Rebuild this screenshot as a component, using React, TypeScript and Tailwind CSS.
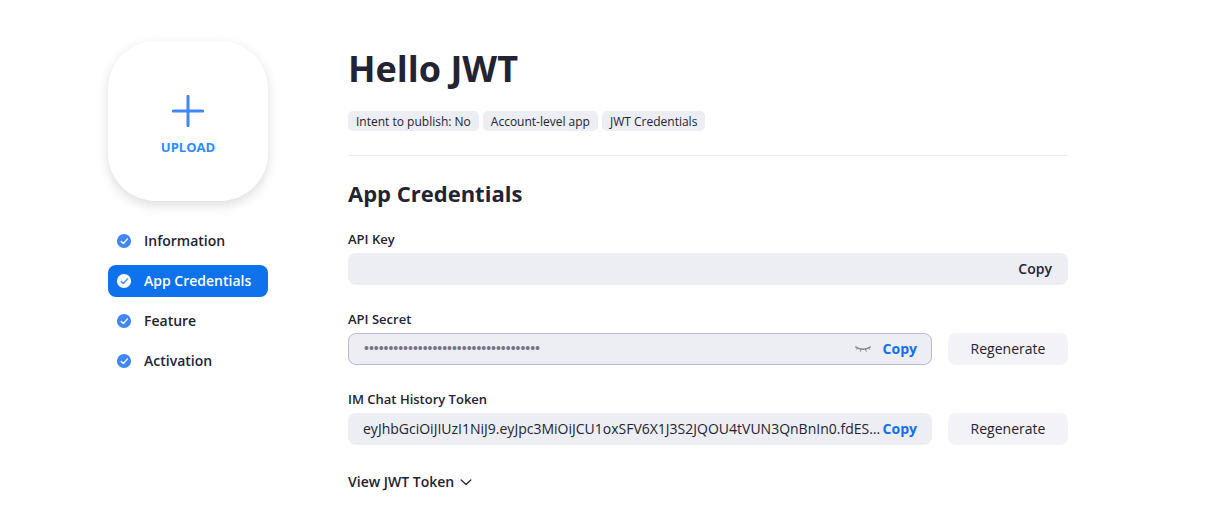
import React, { useState } from "react";

type Step = { label: string; active?: boolean };

const steps: Step[] = [
  { label: "Information" },
  { label: "App Credentials", active: true },
  { label: "Feature" },
  { label: "Activation" },
];

const tags = ["Intent to publish: No", "Account-level app", "JWT Credentials"];

const historyToken =
  "eyJhbGciOiJIUzI1NiJ9.eyJpc3MiOiJCU1oxSFV6X1J3S2JQOU4tVUN3QnBnIn0.fdES4kQm7ZtYw1";

function CheckIcon({ active }: { active?: boolean }) {
  return (
    <svg className="size-4 shrink-0" viewBox="0 0 16 16" fill="none" aria-hidden="true">
      <circle cx="8" cy="8" r="7.1" className={active ? "fill-white" : "fill-[#4087fc]"} />
      <path
        d="M5.2 8.5 7.3 10.6 11.4 5.9"
        className={active ? "stroke-[#4087fc]" : "stroke-white"}
        strokeWidth="1.4"
        strokeLinecap="round"
        strokeLinejoin="round"
      />
    </svg>
  );
}

function PlusIcon() {
  return (
    <svg className="size-8" viewBox="0 0 32 32" fill="none" aria-hidden="true">
      <path d="M16 1.3V30.7M1.3 16H30.7" stroke="#4087fc" strokeWidth="3" strokeLinecap="round" />
    </svg>
  );
}

function ClosedEyeIcon() {
  return (
    <svg className="h-4 w-4" viewBox="0 0 16 16" fill="none" stroke="#82828f" strokeLinecap="round" aria-hidden="true">
      <path d="M.8 6C4.2 9 11.8 9 15.2 6" strokeWidth="1.5" />
      <path d="M2.4 7.2 1.4 8.4M6 8.4 5.4 10.4M10.6 8.4 11.2 10.4M13.6 7.2 14.6 8.4" strokeWidth="0.9" />
    </svg>
  );
}

function Sidebar() {
  return (
    <aside className="w-40 shrink-0">
      <button
        type="button"
        className="flex h-40 w-full flex-col items-center justify-center gap-[10px] rounded-[48px] bg-white pt-[10px] text-[13px] leading-5 font-bold text-[#2d8cff] shadow-[0_4px_12px_rgba(0,0,0,0.14)]"
      >
        <PlusIcon />
        UPLOAD
      </button>
      <nav className="mt-6 flex flex-col gap-2">
        {steps.map((s) => (
          <a
            key={s.label}
            href="#"
            aria-current={s.active ? "step" : undefined}
            className={
              "flex h-8 items-center gap-3 rounded-lg px-2 text-sm font-semibold " +
              (s.active ? "bg-[#0e72ed] text-white" : "text-[#232333]")
            }
          >
            <CheckIcon active={s.active} />
            {s.label}
          </a>
        ))}
      </nav>
    </aside>
  );
}

function Regenerate() {
  return (
    <button type="button" className="h-8 w-30 shrink-0 rounded-lg bg-[#f2f2f7] text-sm">
      Regenerate
    </button>
  );
}

export default function App() {
  const [visible, setVisible] = useState(false);
  const [open, setOpen] = useState(false);

  return (
    <div className="flex min-h-screen gap-20 bg-white pt-[41px] pr-[151px] pb-6 pl-[108px] font-['Open_Sans','Noto_Sans',sans-serif] text-[#232333]">
      <Sidebar />
      <main className="min-w-0 flex-1">
        <h1 className="text-4xl leading-14 font-bold">Hello JWT</h1>
        <ul className="mt-[14px] flex gap-1">
          {tags.map((t) => (
            <li key={t} className="rounded-[5px] bg-[#ededf4] px-2 pt-px text-xs leading-[19px]">
              {t}
            </li>
          ))}
        </ul>
        <hr className="mt-6 border-[#ebebf0]" />

        <h2 className="mt-[21px] text-[22px] leading-8 font-bold">App Credentials</h2>

        <div className="mt-5">
          <label htmlFor="api-key" className="block text-[13px] leading-5 font-semibold">
            API Key
          </label>
          <div className="mt-1 flex h-8 items-center rounded-lg bg-[#ededf4] px-4">
            <input id="api-key" readOnly className="min-w-0 flex-1 bg-transparent text-sm outline-none" />
            <button type="button" className="text-sm font-semibold">
              Copy
            </button>
          </div>
        </div>

        <div className="mt-6">
          <label htmlFor="api-secret" className="block text-[13px] leading-5 font-semibold">
            API Secret
          </label>
          <div className="mt-1 flex gap-4">
            <div className="flex h-8 min-w-0 flex-1 items-center rounded-lg border border-[#babacc] bg-[#ededf4] pr-[14px] pl-[15px]">
              <input
                id="api-secret"
                type={visible ? "text" : "password"}
                readOnly
                value="qJ7bTz0LxW4nRk92VhYpM3sDfGa8UcEi5oKt"
                className="min-w-0 flex-1 bg-transparent text-[13px] font-bold text-[#747487] outline-none"
              />
              <button type="button" aria-label="Show API secret" onClick={() => setVisible(!visible)} className="mr-3">
                <ClosedEyeIcon />
              </button>
              <button type="button" className="text-sm font-bold text-[#0e72ed]">
                Copy
              </button>
            </div>
            <Regenerate />
          </div>
        </div>

        <div className="mt-6">
          <label htmlFor="history-token" className="block text-[13px] leading-5 font-semibold">
            IM Chat History Token
          </label>
          <div className="mt-1 flex gap-4">
            <div className="flex h-8 min-w-0 flex-1 items-center rounded-lg bg-[#ededf4] px-[15px]">
              <input
                id="history-token"
                readOnly
                value={historyToken}
                className="min-w-0 flex-1 bg-transparent text-sm text-ellipsis outline-none"
              />
              <button type="button" className="text-sm font-bold text-[#0e72ed]">
                Copy
              </button>
            </div>
            <Regenerate />
          </div>
        </div>

        <button
          type="button"
          aria-expanded={open}
          onClick={() => setOpen(!open)}
          className="mt-[27px] flex items-center gap-1 text-sm font-semibold"
        >
          View JWT Token
          <svg className="size-4" viewBox="0 0 16 16" fill="none" aria-hidden="true">
            <path d="M3.2 6 8 10.4 12.8 6" stroke="currentColor" strokeWidth="1.3" strokeLinecap="round" strokeLinejoin="round" />
          </svg>
        </button>
      </main>
    </div>
  );
}
